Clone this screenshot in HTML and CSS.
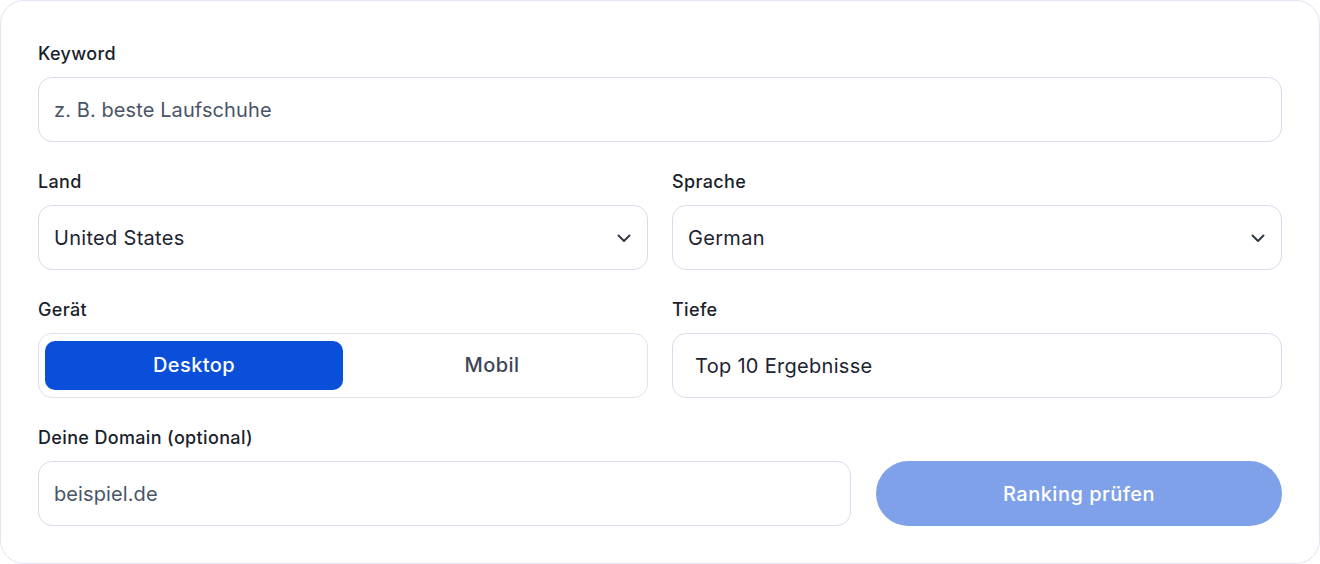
FILE: index.html
```html
<!DOCTYPE html>
<html lang="de">
<head>
<meta charset="utf-8">
<link rel="stylesheet" href="styles.css">
</head>
<body>
<form class="card">
  <div class="field">
    <label class="label">Keyword</label>
    <div class="control"><span class="placeholder">z. B. beste Laufschuhe</span></div>
  </div>
  <div class="row">
    <div class="field">
      <label class="label">Land</label>
      <div class="control select"><span class="value">United States</span>
        <svg class="chev" width="16" height="16" viewBox="0 0 16 16"><path d="M2.5 5.5l5.5 5.5 5.5-5.5" fill="none" stroke="#2f3644" stroke-width="1.9" stroke-linecap="round" stroke-linejoin="round"/></svg>
      </div>
    </div>
    <div class="field">
      <label class="label">Sprache</label>
      <div class="control select"><span class="value">German</span>
        <svg class="chev" width="16" height="16" viewBox="0 0 16 16"><path d="M2.5 5.5l5.5 5.5 5.5-5.5" fill="none" stroke="#2f3644" stroke-width="1.9" stroke-linecap="round" stroke-linejoin="round"/></svg>
      </div>
    </div>
  </div>
  <div class="row">
    <div class="field">
      <label class="label">Gerät</label>
      <div class="toggle">
        <span class="opt active">Desktop</span>
        <span class="opt">Mobil</span>
      </div>
    </div>
    <div class="field">
      <label class="label">Tiefe</label>
      <div class="control depth"><span class="value">Top 10 Ergebnisse</span></div>
    </div>
  </div>
  <div class="row last">
    <div class="field">
      <label class="label">Deine Domain (optional)</label>
      <div class="control"><span class="placeholder">beispiel.de</span></div>
    </div>
    <div class="action">
      <span class="submit">Ranking prüfen</span>
    </div>
  </div>
</form>
</body>
</html>
```
FILE: styles.css
```css
* { box-sizing: border-box; }
html, body { margin: 0; padding: 0; background: #ffffff; }
body { font-family: Inter, "Noto Sans", sans-serif; color: #1a1f2b; }
.card {
  width: 1320px;
  height: 564px;
  border: 1px solid #e2e4f1;
  border-radius: 24px;
  padding: 40px 37px 0 37px;
  display: flex;
  flex-direction: column;
  gap: 27px;
}
.field { display: flex; flex-direction: column; gap: 12px; }
.label { font-size: 18px; font-weight: 500; line-height: 22px; padding-top: 2px; letter-spacing: 0.35px; color: #1a1f2b; }
.control {
  height: 65px;
  border: 1px solid #d6ddec;
  border-radius: 14px;
  display: flex;
  align-items: center;
  padding: 0 15px;
  font-size: 20px;
  letter-spacing: 0.1px;
}
.placeholder { color: #4a5467; }
.value { color: #1d2330; flex: 1; letter-spacing: 0.3px; }
.select { padding-right: 15px; }
.depth { padding-left: 22px; }
.chev { flex: none; }
.row { display: grid; grid-template-columns: 1fr 1fr; column-gap: 24px; }
.row.last { grid-template-columns: 813px 1fr; column-gap: 25px; align-items: end; }
.toggle {
  height: 65px;
  border: 1px solid #dde2ee;
  border-radius: 14px;
  padding: 7px 6px;
  display: grid;
  grid-template-columns: 1fr 1fr;
}
.opt {
  display: flex; align-items: center; justify-content: center;
  font-size: 20px; font-weight: 500; letter-spacing: 0.4px; color: #3d4657;
  border-radius: 10px;
  padding-bottom: 2px;
}
.opt.active { background: #0a4fd9; color: #ffffff; }
.action { display: flex; }
.submit {
  flex: 1;
  height: 65px;
  border-radius: 33px;
  background: #7fa1e9;
  color: #ffffff;
  font-size: 20px;
  font-weight: 500;
  letter-spacing: 0.5px;
  display: flex; align-items: center; justify-content: center;
}
```
